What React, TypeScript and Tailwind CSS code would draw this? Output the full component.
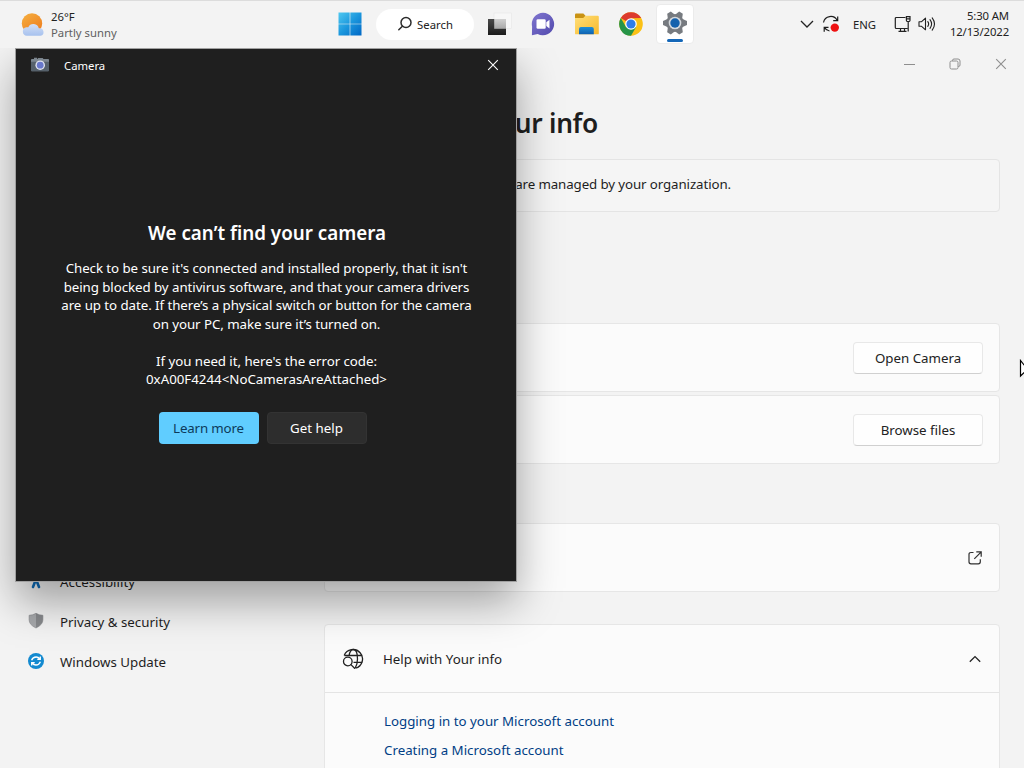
import type { ReactNode } from "react";

const font = "font-['Noto_Sans','Open_Sans',sans-serif]";

function WeatherIcon() {
  return (
    <svg width="24" height="26" viewBox="0 0 24 26">
      <defs>
        <linearGradient id="sun" x1="0" y1="0" x2="0.7" y2="1">
          <stop offset="0" stopColor="#f5b041" />
          <stop offset="1" stopColor="#ee7f1f" />
        </linearGradient>
        <linearGradient id="cloud" x1="0" y1="0" x2="0" y2="1">
          <stop offset="0" stopColor="#d3e0f6" />
          <stop offset="1" stopColor="#a6c1ee" />
        </linearGradient>
      </defs>
      <circle cx="11" cy="11.5" r="10.2" fill="url(#sun)" />
      <path
        d="M5.8 23.8a4.3 4.3 0 0 1-.5-8.5a5 5 0 0 1 2-.1a5.6 5.6 0 0 1 10.5 1.1a3.8 3.8 0 0 1 1.7 7.5z"
        fill="url(#cloud)"
      />
    </svg>
  );
}

function WindowsIcon() {
  return (
    <svg width="24" height="24" viewBox="0 0 24 24">
      <defs>
        <linearGradient id="win" x1="0" y1="0" x2="1" y2="1">
          <stop offset="0" stopColor="#4fc8f0" />
          <stop offset="0.5" stopColor="#1b97dd" />
          <stop offset="1" stopColor="#0067c5" />
        </linearGradient>
      </defs>
      <path
        d="M.5.5h11.200v11.200H.5zM12.300.5h11.200v11.200H12.300zM.5 12.300h11.200v11.200H.5zM12.300 12.300h11.200v11.200H12.300z"
        fill="url(#win)"
      />
    </svg>
  );
}

function SearchIcon() {
  return (
    <svg width="16" height="16" viewBox="0 0 16 16" fill="none" stroke="#2c2c2c" strokeWidth="1.5">
      <circle cx="9" cy="6.5" r="5" />
      <path d="M5.400 10.200L1.800 13.800" strokeLinecap="round" />
    </svg>
  );
}

function TaskViewIcon() {
  return (
    <svg width="24" height="24" viewBox="0 0 24 24">
      <defs>
        <linearGradient id="tvBack" x1="0" y1="0" x2="0" y2="1">
          <stop offset="0" stopColor="#4a4a4a" />
          <stop offset="1" stopColor="#1b1b1b" />
        </linearGradient>
        <linearGradient id="tvFront" x1="0" y1="0" x2="0" y2="1">
          <stop offset="0" stopColor="#d0d0d0" />
          <stop offset="1" stopColor="#a8a8a8" />
        </linearGradient>
      </defs>
      <rect x="6" y="1" width="17.5" height="15.5" fill="#f7f7f7" stroke="#e6e6e6" strokeWidth=".6" />
      <path d="M0 7h18v16H0z" fill="url(#tvBack)" />
      <path d="M6.200 7H18v9.800H6.200z" fill="url(#tvFront)" />
    </svg>
  );
}

function ChatIcon() {
  return (
    <svg width="24" height="24" viewBox="0 0 24 24">
      <defs>
        <linearGradient id="chat" x1="0" y1="0" x2="1" y2="1">
          <stop offset="0" stopColor="#8076cf" />
          <stop offset="1" stopColor="#5149ad" />
        </linearGradient>
      </defs>
      <path
        d="M12 .8a11.200 11.200 0 1 1-5.300 21.100L.9 23.200l.2-8.600A11.200 11.200 0 0 1 12 .8z"
        fill="url(#chat)"
      />
      <rect x="5.5" y="7.300" width="9.200" height="9.500" rx="1.300" fill="#fff" />
      <path d="M15.300 10.200l3.200-2.500v8.700l-3.200-2.500z" fill="#fff" />
    </svg>
  );
}

function FolderIcon() {
  return (
    <svg width="26" height="24" viewBox="0 0 26 24">
      <defs>
        <linearGradient id="folder" x1="0" y1="0" x2="1" y2="1">
          <stop offset="0" stopColor="#ffdf78" />
          <stop offset="1" stopColor="#f7b92c" />
        </linearGradient>
        <linearGradient id="folderBlue" x1="0" y1="0" x2="0" y2="1">
          <stop offset="0" stopColor="#1d8fd8" />
          <stop offset="1" stopColor="#0f5fae" />
        </linearGradient>
      </defs>
      <path d="M1 2.600Q1 1.500 2.100 1.500h7.300l2 2.200v3H1z" fill="#c99213" />
      <path d="M1 6h8.200l2.200-2.300h12.300q1.100 0 1.100 1.100v16.600q0 .9-.9.900H1.900q-.9 0-.9-.9z" fill="url(#folder)" />
      <path d="M5 22.300v-5.300q0-1.900 1.900-1.900h11q1.900 0 1.900 1.900v5.300z" fill="url(#folderBlue)" />
    </svg>
  );
}

function ChromeIcon() {
  return (
    <svg width="24" height="24" viewBox="0 0 24 24">
      <circle cx="12" cy="12" r="11.800" fill="#fbc116" />
      <path d="M12 12L1.780 6.100A11.800 11.800 0 0 1 22.220 6.100L12 6.200z" fill="#dc3a2e" />
      <path d="M1.780 6.100A11.800 11.800 0 0 0 12 23.800l5.100-8.900L7 15z" fill="#269447" />
      <circle cx="12" cy="12" r="5.800" fill="#fff" />
      <circle cx="12" cy="12" r="4.600" fill="#2f7de9" />
    </svg>
  );
}

const teeth = [0, 60, 120, 180, 240, 300];

function SettingsIcon() {
  return (
    <svg width="26" height="26" viewBox="0 0 26 26">
      <g fill="#777b80">
        <circle cx="13" cy="13" r="9" />
        {teeth.map((angle) => (
          <path
            key={angle}
            d="M10.900 1h4.200l1.800 4.500H9.100z"
            transform={`rotate(${angle + 30} 13 13)`}
          />
        ))}
      </g>
      <circle cx="13" cy="13" r="6.300" fill="#d6dade" />
      <circle cx="13" cy="13" r="4.700" fill="#1562ad" />
    </svg>
  );
}

function SyncIcon() {
  return (
    <svg width="18" height="18" viewBox="0 0 18 18" fill="none" stroke="#1c1c1c" strokeWidth="1.2">
      <path d="M1.500 7.500A7.300 7.300 0 0 1 15.200 5.500M15.700 1.400v4.300h-4.500" />
      <path d="M7.500 16A7 7 0 0 1 2.600 12.600M2.200 16.800v-4.500h4.300" />
      <circle cx="12.800" cy="12.600" r="4.200" fill="#ee1111" stroke="none" />
    </svg>
  );
}

function NetworkIcon() {
  return (
    <svg width="18" height="18" viewBox="0 0 18 18" fill="none" stroke="#222" strokeWidth="1.2">
      <path d="M11.500 2.500H2.300q-1 0-1 1v9q0 1 1 1h11.500M4.500 16.400h8M6.500 13.500v2.800M10.500 13.500v2.800" />
      <path d="M12.400 1.600h3.600v3.800q0 1.200-1.800 1.200t-1.800-1.200zM12.400 3.800h3.600M14.200 6.800v9.600" />
    </svg>
  );
}

function VolumeIcon() {
  return (
    <svg width="18" height="16" viewBox="0 0 18 16" fill="none" stroke="#222" strokeWidth="1.1">
      <path d="M1 5.700h2.600L7.500 2.200v11.600L3.600 10.300H1z" strokeLinejoin="round" />
      <path d="M9.800 5.600q1.700 2.400 0 4.800M12 3.700q3.200 4.300 0 8.600M14.200 1.900q4.600 6.100 0 12.200" strokeLinecap="round" />
    </svg>
  );
}

function CameraIcon() {
  return (
    <svg width="20" height="16" viewBox="0 0 20 16">
      <path d="M4 .8h3v2.500H4zM7 2.500L8.100.9h4.600l1.200 1.600z" fill="#7c858e" />
      <rect x="1" y="2" width="18" height="12.500" rx="1.200" fill="#56616b" />
      <path d="M1 3.200Q1 2 2.200 2h15.600q1.200 0 1.200 1.200v1.600H1z" fill="#7d8790" />
      <circle cx="10.200" cy="8.200" r="4.800" fill="#dfe3f0" />
      <circle cx="10.200" cy="8.200" r="3.400" fill="#6878cb" />
    </svg>
  );
}

function AccessibilityIcon() {
  return (
    <svg width="16" height="16" viewBox="0 0 16 16" fill="none" stroke="#0c69b4" strokeWidth="2.6" strokeLinecap="round" strokeLinejoin="round">
      <circle cx="8" cy="2.300" r="1" />
      <path d="M3 5.600l5 1.400 5-1.400M8 7v2M5 14L7 8.800h2l2 5.200" />
    </svg>
  );
}

function ShieldIcon() {
  return (
    <svg width="16" height="16" viewBox="0 0 16 16">
      <path d="M8 .3q3 1.900 6.900 2v4.500q0 5-6.900 8.200z" fill="#87898c" />
      <path d="M8 .3Q5 2.200 1.100 2.300v4.500q0 5 6.900 8.200z" fill="#a6a8ab" />
      <path d="M8 .3q3 1.900 6.900 2v4.500q0 5-6.900 8.200Q1.100 11.800 1.100 6.800V2.300Q5 2.200 8 .3z" fill="none" stroke="#85878a" strokeWidth=".6" />
    </svg>
  );
}

function UpdateIcon() {
  return (
    <svg width="16" height="16" viewBox="0 0 16 16">
      <circle cx="8" cy="8" r="8" fill="#138ad0" />
      <g fill="none" stroke="#fff" strokeWidth="1.3">
        <path d="M3.600 7.200q1.200-3.200 4.500-3.200 2.200 0 3.800 2M12.300 3.400v3H9.300" />
        <path d="M12.400 8.800Q11.200 12 7.900 12q-2.200 0-3.800-2M3.700 12.600v-3h3" />
      </g>
    </svg>
  );
}

function GlobeSearchIcon() {
  return (
    <svg width="22" height="22" viewBox="0 0 22 22" fill="none" stroke="#222" strokeWidth="1.3">
      <path d="M2.200 7.500A9.500 9.500 0 1 1 13.500 20.200" />
      <path d="M7 8Q8 1.500 11.300 1.500q4.200 0 4.200 9.500 0 5-2.300 9M2.500 7.500h17.600M11.500 14.300h8.700" />
      <circle cx="5.800" cy="13.500" r="4.300" />
      <path d="M8.900 16.600l3.700 3.700" strokeLinecap="round" />
    </svg>
  );
}

function OpenIcon() {
  return (
    <svg width="14" height="14" viewBox="0 0 14 14" fill="none" stroke="#303030" strokeWidth="1.2">
      <path d="M5.500 1.500H3Q1 1.500 1 3.500v7.300q0 2 2 2h7.300q2 0 2-2V8.300" />
      <path d="M8.300.9h4.900v4.900M13 1.100L6.300 7.800" />
    </svg>
  );
}

function Chevron({ up = false }: { up?: boolean }) {
  return (
    <svg width="14" height="8" viewBox="0 0 14 8" fill="none" stroke="#222" strokeWidth="1.3" className={up ? "rotate-180" : ""}>
      <path d={up ? "M1.800 1.200L7 6.400l5.200-5.200" : "M1 1l6 6 6-6"} />
    </svg>
  );
}

function CloseIcon({ color }: { color: string }) {
  return (
    <svg width="12" height="12" viewBox="0 0 12 12" stroke={color} strokeWidth="1.1">
      <path d="M1.200 1.200l9.600 9.600M10.800 1.200l-9.600 9.600" />
    </svg>
  );
}

function Taskbar() {
  return (
    <header className="relative z-20 flex h-12 shrink-0 items-center border-t border-[#dcdcdc] bg-[#f3f3f3] text-[#222]">
      <div className="flex w-[338px] items-center gap-[6px] pl-[21px]">
        <WeatherIcon />
        <div className="text-[11.3px] leading-4">
          <p className="whitespace-nowrap">26°F</p>
          <p className="whitespace-nowrap text-[#606060]">Partly sunny</p>
        </div>
      </div>
      <div className="flex w-[459px] items-center pb-px">
        <WindowsIcon />
        <div className="ml-[14px] flex h-[31px] w-[98px] items-center justify-center gap-[4px] rounded-full bg-white text-[11.3px]">
          <SearchIcon />
          <span className="pt-[2px]">Search</span>
        </div>
        <div className="ml-[14px] flex items-center gap-[19px]">
          <TaskViewIcon />
          <ChatIcon />
          <FolderIcon />
          <ChromeIcon />
        </div>
        <div className="ml-[13px] flex h-10 w-[38px] flex-col items-center rounded border border-[#ebebeb] bg-white pt-[5px]">
          <SettingsIcon />
          <div className="mt-[3px] h-[3px] w-4 shrink-0 rounded-full bg-[#1467b8]" />
        </div>
      </div>
      <div className="flex flex-1 items-center pb-px pl-[3px]">
        <Chevron />
        <div className="ml-[8px]">
          <SyncIcon />
        </div>
        <span className="ml-[13px] w-[28px] pt-[2px] text-[11.3px]">ENG</span>
        <div className="ml-[13px]">
          <NetworkIcon />
        </div>
        <div className="ml-[6px]">
          <VolumeIcon />
        </div>
        <div className="flex-1 pr-[15px] text-right text-[11.3px] leading-4 tracking-[-0.1px]">
          <p>5:30 AM</p>
          <p className="whitespace-nowrap">12/13/2022</p>
        </div>
      </div>
    </header>
  );
}

function NavItem({ icon, label }: { icon: ReactNode; label: string }) {
  return (
    <div className="flex h-10 items-center gap-4 pl-7">
      {icon}
      <span className="pt-[4px]">{label}</span>
    </div>
  );
}

function Card({ children, className = "" }: { children?: ReactNode; className?: string }) {
  return (
    <div className={`flex shrink-0 items-center justify-end rounded border border-[#e6e6e6] bg-[#fbfbfb] pr-4 ${className}`}>
      {children}
    </div>
  );
}

function CardButton({ label }: { label: string }) {
  return (
    <button className="h-8 w-[130px] rounded border border-[#e8e8e8] border-b-[#d0d0d0] bg-[#fefefe] pt-[2px] text-[#222]">
      {label}
    </button>
  );
}

function SettingsWindow() {
  return (
    <main className="flex flex-1 flex-col overflow-hidden">
      <div className="flex h-8 shrink-0 items-center justify-end gap-[34px] pr-[17px]">
        <div className="h-px w-[11px] bg-[#8e8e8e]" />
        <svg width="12" height="12" viewBox="0 0 12 12" fill="none" stroke="#8e8e8e">
          <rect x="1" y="3" width="8" height="8" rx="1.5" />
          <path d="M3.500 3V2.500Q3.500 1 5 1h4q2 0 2 2v4q0 1.500-1.500 1.500H9" />
        </svg>
        <CloseIcon color="#8e8e8e" />
      </div>
      <div className="flex flex-1">
        <nav className="w-[324px] shrink-0 pt-[481px]">
          <NavItem icon={<AccessibilityIcon />} label="Accessibility" />
          <NavItem icon={<ShieldIcon />} label="Privacy & security" />
          <NavItem icon={<UpdateIcon />} label="Windows Update" />
        </nav>
        <section className="flex w-[676px] flex-col pt-[25px]">
          <h1 className="flex h-[38px] w-[274px] items-center justify-end whitespace-nowrap text-[26.3px] font-semibold tracking-[-0.3px]">
            Your info
          </h1>
          <div className="mt-[16px] flex h-[53px] shrink-0 items-center rounded border border-[#e4e4e4] bg-[#f5f5f5]">
            <p className="w-[406px] whitespace-nowrap pb-[2px] text-right tracking-[-0.1px]">
              Some settings are managed by your organization.
            </p>
          </div>
          <Card className="mt-[111px] h-[69px]">
            <CardButton label="Open Camera" />
          </Card>
          <Card className="mt-[3px] h-[69px]">
            <CardButton label="Browse files" />
          </Card>
          <Card className="mt-[59px] h-[69px]">
            <OpenIcon />
            <span className="w-px" />
          </Card>
          <div className="mt-[32px] flex h-[200px] shrink-0 flex-col rounded border border-[#e6e6e6] bg-[#fbfbfb]">
            <div className="flex h-[68px] shrink-0 items-center border-b border-[#e4e4e4] pl-[17px] pr-[17px]">
              <GlobeSearchIcon />
              <span className="ml-[19px] flex-1 pt-[2px]">Help with Your info</span>
              <Chevron up />
            </div>
            <div className="flex flex-col gap-[9px] pl-[59px] pt-[18px] leading-5 text-[#003e85]">
              <a>Logging in to your Microsoft account</a>
              <a>Creating a Microsoft account</a>
            </div>
          </div>
        </section>
      </div>
    </main>
  );
}

const message = [
  "Check to be sure it's connected and installed properly, that it isn't",
  "being blocked by antivirus software, and that your camera drivers",
  "are up to date. If there’s a physical switch or button for the camera",
  "on your PC, make sure it’s turned on.",
];

function CameraWindow() {
  return (
    <div className="absolute left-[15px] top-[48px] z-10 flex h-[534px] w-[502px] flex-col border border-[#a0a0a0] bg-[#1f1f1f] text-white shadow-[0_20px_40px_0px_rgba(0,0,0,0.34)]">
      <div className="flex h-8 shrink-0 items-center pl-[14px] pr-[17px]">
        <CameraIcon />
        <span className="ml-[14px] flex-1 pt-[2px] text-[11.3px]">Camera</span>
        <CloseIcon color="#fff" />
      </div>
      <div className="flex flex-col items-center pl-px pt-[138px] text-center">
        <h2 className="pl-px text-[18.8px] font-semibold leading-7">We can’t find your camera</h2>
        <div className="mt-[12px] whitespace-nowrap leading-[18.6px] tracking-[-0.06px]">
          {message.map((line) => (
            <p key={line}>{line}</p>
          ))}
        </div>
        <div className="mt-[18.5px] leading-[18.6px]">
          <p className="tracking-[-0.05px]">If you need it, here's the error code:</p>
          <p>0xA00F4244&lt;NoCamerasAreAttached&gt;</p>
        </div>
        <div className="mr-[8px] mt-[22.5px] flex gap-2">
          <button className="h-8 w-[100px] rounded bg-[#60cdff] pt-[2px] tracking-[-0.15px] text-[#0c3a5a]">Learn more</button>
          <button className="h-8 w-[100px] rounded border border-[#333] bg-[#2d2d2d] pt-[2px]">Get help</button>
        </div>
      </div>
    </div>
  );
}

function App() {
  return (
    <div className={`relative flex h-[768px] w-[1024px] flex-col overflow-hidden bg-[#f3f3f3] text-[13.3px] text-[#1e1e1e] ${font}`}>
      <Taskbar />
      <SettingsWindow />
      <CameraWindow />
      <svg className="absolute left-[1019px] top-[359px]" width="12" height="19" viewBox="0 0 12 19">
        <path d="M1.500 1.500v15.500l3.600-3.500h6z" fill="#fff" stroke="#000" strokeWidth="1.2" />
      </svg>
    </div>
  );
}

export default App;
